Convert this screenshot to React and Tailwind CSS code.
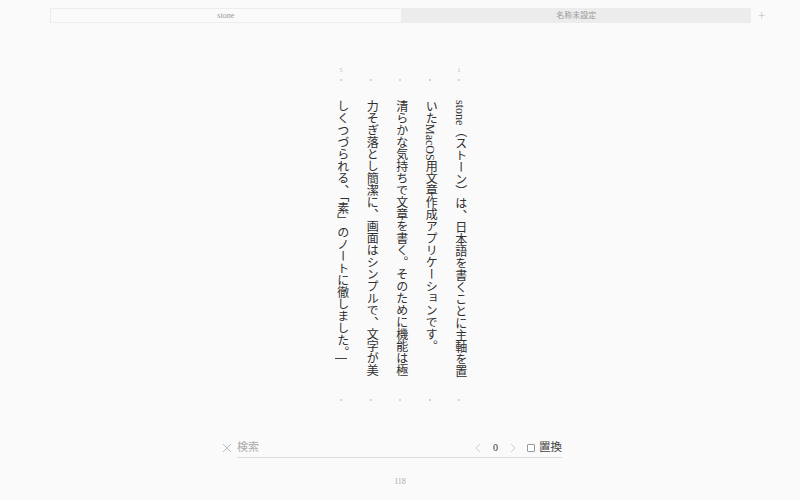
import React from 'react';

const lines = [
  { no: '1', text: 'stone（ストーン）は、日本語を書くことに主軸を置' },
  { no: '', text: 'いたMacOS用文章作成アプリケーションです。' },
  { no: '', text: '清らかな気持ちで文章を書く。そのために機能は極' },
  { no: '', text: '力そぎ落とし簡潔に、画面はシンプルで、文字が美' },
  { no: '5', text: 'しくつづられる、「素」のノートに徹しました。', caret: true },
];

const serif = { fontFamily: '"Liberation Serif", "Noto Sans CJK JP", serif' };

const Column = ({ line }) => (
  <div className="flex flex-col items-center w-[29.5px]">
    <div className="h-[10px] text-[6px] leading-[10px] text-[#b8b8b8]">{line.no}</div>
    <div className="h-[10px] flex items-center">
      <span className="block w-[2px] h-[2px] rounded-full bg-[#c8c8c8]" />
    </div>
    <div className="h-[15px]" />
    <div className="h-[290px] w-[29.5px] relative">
      <div className="[writing-mode:vertical-rl] w-[29.5px] h-[290px] text-[12px] leading-[29.5px] text-[#2e2e2e]">
        {line.text}
      </div>
      {line.caret && (
        <span className="absolute left-[9px] top-[258px] w-[12px] h-[1px] bg-[#444]" />
      )}
    </div>
    <div className="h-[20px] flex items-center">
      <span className="block w-[2px] h-[2px] rounded-full bg-[#c8c8c8]" />
    </div>
  </div>
);

export default function App() {
  return (
    <div className="w-[800px] h-[500px] bg-[#fafafa] flex flex-col overflow-hidden" style={serif}>
      {/* Tabs */}
      <div className="flex items-center pt-[8px] pl-[50px]">
        <div className="flex w-[701px] h-[15px] text-[8px] text-[#999]">
          <div className="flex-1 flex items-center justify-center border border-[#ececec] bg-[#fafafa]">
            stone
          </div>
          <div className="flex-1 flex items-center justify-center bg-[#ececec]">名称未設定</div>
        </div>
        <div className="ml-[7px] text-[#bbb] text-[13px] leading-[15px] font-light">+</div>
      </div>

      {/* Vertical text */}
      <div className="flex justify-center mt-[42px]">
        <div className="flex flex-row-reverse">
          {lines.map((line, i) => (
            <Column key={i} line={line} />
          ))}
        </div>
      </div>

      {/* Search bar */}
      <div className="flex items-center mt-[28px] ml-[222px] w-[340px] h-[20px]">
        <svg width="10" height="10" viewBox="0 0 10 10" className="shrink-0">
          <path d="M1 1L9 9M9 1L1 9" stroke="#bbb" strokeWidth="1" />
        </svg>
        <div className="flex items-center flex-1 ml-[5px] h-[20px] border-b border-[#dedede]">
          <span className="text-[11px] text-[#aaa]">検索</span>
          <div className="flex-1" />
          <svg width="8" height="10" viewBox="0 0 8 10" className="mr-[11px]">
            <path d="M6 1L2 5L6 9" stroke="#ccc" strokeWidth="1" fill="none" />
          </svg>
          <span className="text-[10px] text-[#333]">0</span>
          <svg width="8" height="10" viewBox="0 0 8 10" className="ml-[11px] mr-[10px]">
            <path d="M2 1L6 5L2 9" stroke="#ccc" strokeWidth="1" fill="none" />
          </svg>
          <span className="w-[8px] h-[8px] border border-[#999] rounded-[1px] bg-white mr-[4px]" />
          <span className="text-[11.5px] text-[#444]">置換</span>
        </div>
      </div>

      {/* Page number */}
      <div className="text-center text-[8px] text-[#aaa] mt-[18px]">118</div>
    </div>
  );
}
